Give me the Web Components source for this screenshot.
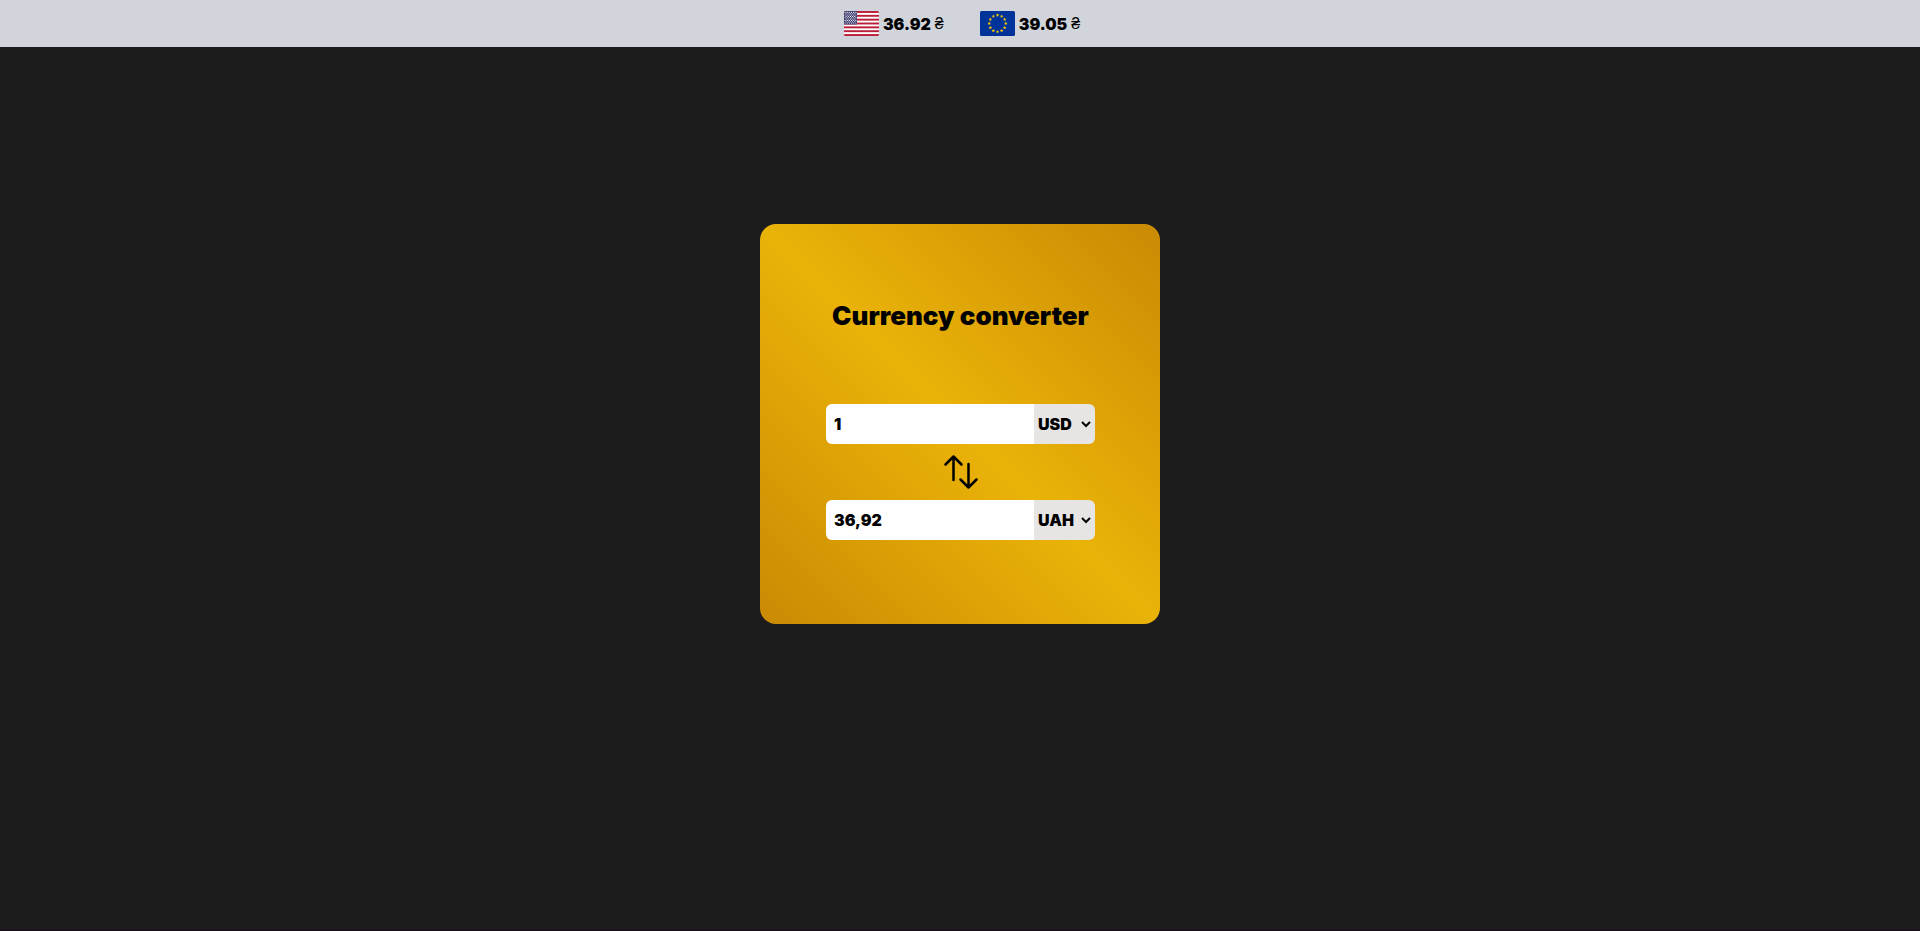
<!DOCTYPE html>
<html lang="en">
<head>
<meta charset="utf-8">
<title>Currency converter</title>
<style>
  body { margin: 0; background: #1c1c1c; color: #000; font: 900 16px/24px Inter, "Liberation Sans", sans-serif; }
</style>
</head>
<body>
<converter-app></converter-app>

<template id="app-template">
  <style>
    :host { display: flex; flex-direction: column; min-height: 100vh; box-sizing: border-box; background: #1c1c1c; border-bottom: 2px solid #1b131b; }
    header { display: flex; justify-content: center; gap: 36px; padding: 11px 0 11px 4px; background: #d1d5db; }
    main { flex: 1; display: flex; justify-content: center; align-items: center; padding-bottom: 128px; }
  </style>
  <header>
    <rate-badge rate="36.92" flag="us"></rate-badge>
    <rate-badge rate="39.05" flag="eu"></rate-badge>
  </header>
  <main><converter-card></converter-card></main>
</template>

<template id="rate-template">
  <style>
    :host { display: flex; align-items: center; gap: 4px; height: 25px; }
    svg { display: block; width: 35px; height: 25px; }
    .sign { font-weight: 400; font-family: "Liberation Sans", sans-serif; }
  </style>
  <span class="flag"></span>
  <span class="value"></span>
  <span class="sign">₴</span>
</template>

<template id="card-template">
  <style>
    :host { display: block; box-sizing: border-box; width: 400px; min-height: 400px; padding: 76px 65px 84px 66px; border-radius: 16px; background: linear-gradient(45deg, #ca8a04, #eab308, #ca8a04); }
    h1 { margin: 0 0 72px; font-size: 26px; line-height: 32px; font-weight: 900; text-align: center; white-space: nowrap; }
    button { display: block; margin: 8px auto; padding: 0; width: 40px; height: 40px; border: 0; background: none; cursor: pointer; }
    svg { display: block; }
  </style>
  <h1>Currency converter</h1>
  <money-field value="1" currency="USD" label="Amount to convert"></money-field>
  <button type="button" aria-label="Swap currencies">
    <svg width="40" height="40" viewBox="0 0 40 40" fill="none" stroke="#000" stroke-width="2.5" stroke-linecap="round" stroke-linejoin="round"><path d="M4.500 12.500 12.500 4.500 20.500 12.500M12.500 4.500V28M19.500 27.500 27.500 35.500 35.500 27.500M27.500 35.500V12"/></svg>
  </button>
  <money-field value="36,92" currency="UAH" label="Converted amount"></money-field>
</template>

<template id="field-template">
  <style>
    :host { display: flex; height: 40px; border-radius: 6px; overflow: hidden; }
    input, select { box-sizing: border-box; margin: 0; border: 0; border-radius: 0; outline: 0; font: inherit; color: #000; }
    input { flex: 1; min-width: 0; padding: 8px; background: #fff; }
    .pick { position: relative; flex: none; width: 61px; background: #e7e5e4; }
    select { appearance: none; width: 100%; height: 40px; padding: 0 0 0 4px; background: none; }
    svg { position: absolute; right: 4px; top: 15px; pointer-events: none; }
  </style>
  <input type="text">
  <div class="pick">
    <select><option>USD</option><option>EUR</option><option>UAH</option></select>
    <svg width="10" height="10" viewBox="0 0 10 10" fill="none" stroke="#000" stroke-width="2"><path d="M1 3 5 7 9 3"/></svg>
  </div>
</template>

<script>
  const clone = (host, id) => {
    const root = host.attachShadow({ mode: "open" });
    root.append(document.getElementById(id).content.cloneNode(true));
    return root;
  };

  const usFlag = () => {
    let s = '<rect width="35" height="25" fill="#fff"/>';
    for (let i = 0; i < 13; i += 2) s += `<rect y="${i * 25 / 13}" width="35" height="${25 / 13}" fill="#b91f38"/>`;
    s += '<rect width="13" height="13.46" fill="#3c3b6e"/>';
    for (let r = 0; r < 9; r++)
      for (let c = r % 2; c < 11; c += 2)
        s += `<circle cx="${1.1 + c * 1.08}" cy="${1.4 + r * 1.33}" r=".55" fill="#fff"/>`;
    return s;
  };

  const euFlag = () => {
    let s = '<rect width="35" height="25" fill="#039"/>';
    for (let i = 0; i < 12; i++) {
      const cx = 17.5 + 8.3 * Math.sin(i * Math.PI / 6), cy = 12.5 - 8.3 * Math.cos(i * Math.PI / 6);
      const pts = [];
      for (let k = 0; k < 10; k++) {
        const r = k % 2 ? 0.8 : 1.9, a = k * Math.PI / 5;
        pts.push((cx + r * Math.sin(a)).toFixed(2) + "," + (cy - r * Math.cos(a)).toFixed(2));
      }
      s += `<polygon points="${pts.join(" ")}" fill="#fc0"/>`;
    }
    return s;
  };

  customElements.define("rate-badge", class extends HTMLElement {
    constructor() {
      super();
      const root = clone(this, "rate-template");
      const flag = this.getAttribute("flag");
      root.querySelector(".value").textContent = this.getAttribute("rate");
      root.querySelector(".flag").innerHTML =
        `<svg viewBox="0 0 35 25" role="img" aria-label="${flag.toUpperCase()}"><defs><clipPath id="c"><rect width="35" height="25" rx="1.500"/></clipPath></defs><g clip-path="url(#c)">${flag === "us" ? usFlag() : euFlag()}</g></svg>`;
    }
  });

  customElements.define("money-field", class extends HTMLElement {
    constructor() {
      super();
      const root = clone(this, "field-template");
      const input = root.querySelector("input"), select = root.querySelector("select");
      input.value = this.getAttribute("value");
      input.setAttribute("aria-label", this.getAttribute("label"));
      select.value = this.getAttribute("currency");
      select.setAttribute("aria-label", this.getAttribute("label") + " currency");
    }
  });

  customElements.define("converter-card", class extends HTMLElement {
    constructor() { super(); clone(this, "card-template"); }
  });

  customElements.define("converter-app", class extends HTMLElement {
    constructor() { super(); clone(this, "app-template"); }
  });
</script>
</body>
</html>
